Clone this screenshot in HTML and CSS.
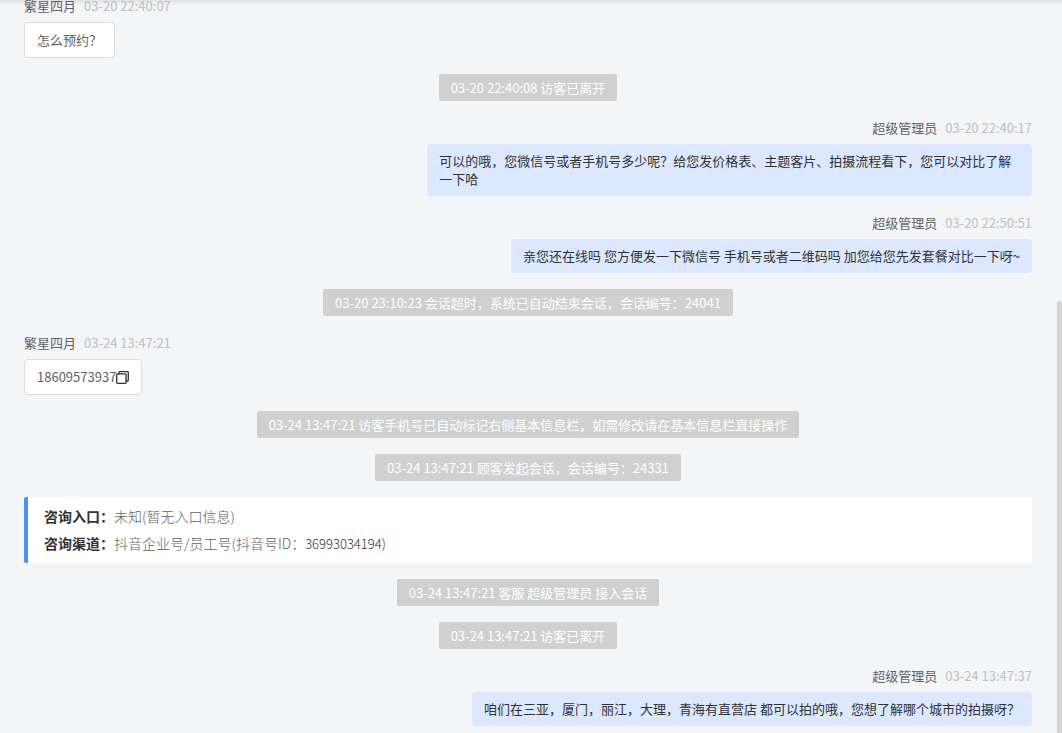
FILE: index.html
```html
<!DOCTYPE html>
<html lang="zh-CN">
<head>
    <meta charset="UTF-8">
    <meta name="viewport" content="width=device-width, initial-scale=1.0">
    <title>会话记录</title>
    <link rel="stylesheet" href="styles.css">
</head>
<body>
    <main class="chat">
        <div class="message visitor">
            <div class="meta"><span class="name">繁星四月</span><time>03-20 22:40:07</time></div>
            <div class="bubble">怎么预约？</div>
        </div>

        <div class="notice">03-20 22:40:08 访客已离开</div>

        <div class="message agent">
            <div class="meta"><span class="name">超级管理员</span><time>03-20 22:40:17</time></div>
            <div class="bubble">可以的哦，您微信号或者手机号多少呢？给您发价格表、主题客片、拍摄流程看下，您可以对比了解一下哈</div>
        </div>

        <div class="message agent">
            <div class="meta"><span class="name">超级管理员</span><time>03-20 22:50:51</time></div>
            <div class="bubble">亲您还在线吗 您方便发一下微信号 手机号或者二维码吗 加您给您先发套餐对比一下呀~</div>
        </div>

        <div class="notice">03-20 23:10:23 会话超时，系统已自动结束会话，会话编号：24041</div>

        <div class="message visitor">
            <div class="meta"><span class="name">繁星四月</span><time>03-24 13:47:21</time></div>
            <div class="bubble phone">
                <span>18609573937</span>
                <button class="copy" type="button" aria-label="复制">
                    <svg width="13" height="13" viewBox="0 0 13 13" fill="none" stroke="currentColor" stroke-width="1.3" stroke-linejoin="round" stroke-linecap="round">
                        <rect x="0.7" y="2.9" width="9.4" height="9.4" rx="0.8"/>
                        <path d="M3 2.9V1.4Q3 0.7 3.7 0.7H11.6Q12.3 0.7 12.3 1.4V9.3Q12.3 10 11.6 10H10.1"/>
                    </svg>
                </button>
            </div>
        </div>

        <div class="notice">03-24 13:47:21 访客手机号已自动标记右侧基本信息栏，如需修改请在基本信息栏直接操作</div>

        <div class="notice">03-24 13:47:21 顾客发起会话，会话编号：24331</div>

        <div class="source">
            <p><strong>咨询入口：</strong>未知(暂无入口信息)</p>
            <p><strong>咨询渠道：</strong>抖音企业号/员工号(抖音号ID：<span class="account">36993034194)</span></p>
        </div>

        <div class="notice">03-24 13:47:21 客服 超级管理员 接入会话</div>

        <div class="notice">03-24 13:47:21 访客已离开</div>

        <div class="message agent">
            <div class="meta"><span class="name">超级管理员</span><time>03-24 13:47:37</time></div>
            <div class="bubble">咱们在三亚，厦门，丽江，大理，青海有直营店 都可以拍的哦，您想了解哪个城市的拍摄呀？</div>
        </div>
    </main>
    <div class="scroll-thumb"></div>
</body>
</html>
```

FILE: styles.css
```css
* {
    box-sizing: border-box;
}
body {
    margin: 0;
    background-color: #f4f5f7;
    font-family: "Noto Sans CJK SC", sans-serif;
    font-size: 13px;
    line-height: 18px;
    color: #303133;
}
/* newest message stays at the bottom, older ones run off the top */
.chat {
    display: flex;
    flex-direction: column;
    justify-content: flex-end;
    gap: 16px;
    height: 100vh;
    overflow: hidden;
    padding: 0 30px 7px 24px;
    background-image: linear-gradient(rgba(0, 0, 0, 0.08), rgba(0, 0, 0, 0) 6px);
}
.message,
.notice,
.source {
    flex-shrink: 0;
}
.message {
    display: flex;
    flex-direction: column;
    align-items: flex-start;
    gap: 5px;
}
.message.agent {
    align-items: flex-end;
}
.meta {
    display: flex;
    gap: 8px;
    line-height: 22px;
}
.name {
    color: #606266;
}
.meta time {
    color: #c0c0c0;
}
.bubble {
    max-width: 60%;
    padding: 8px 12px;
    border-radius: 4px;
}
.visitor .bubble {
    background-color: #fff;
    border: 1px solid #dcdcdc;
    color: #606266;
}
.agent .bubble {
    background-color: #dce8ff;
}
.phone {
    display: flex;
    align-items: center;
}
.copy {
    display: flex;
    padding: 0;
    border: none;
    background: none;
    color: #333;
    cursor: pointer;
}
.notice {
    align-self: center;
    padding: 5px 12px 4px;
    border-radius: 2px;
    background-color: #d0d0d0;
    color: #fff;
}
.source {
    padding: 6px 16px;
    border-left: 4px solid #4c8ffb;
    border-radius: 2px 0 0 2px;
    background-color: #fff;
    font-size: 14px;
    line-height: 27px;
    font-weight: 300;
}
.source p {
    margin: 0;
    color: #606266;
}
.source strong {
    font-weight: 700;
    color: #303133;
}
.source .account {
    font-size: 13px;
    color: #303133;
}
.scroll-thumb {
    position: fixed;
    top: 41%;
    right: 0;
    bottom: 0;
    width: 5px;
    border-radius: 3px 3px 0 0;
    background-color: #d4d4d4;
}
```
